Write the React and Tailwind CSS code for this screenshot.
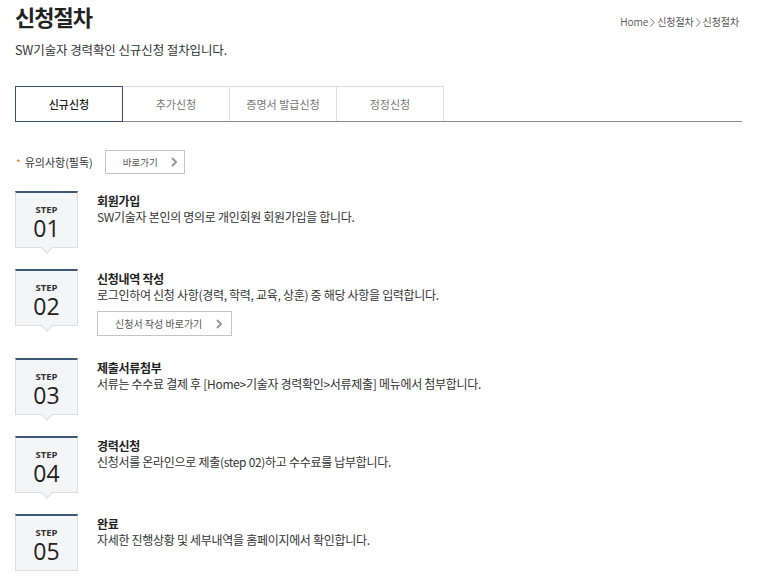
import React from "react";

const KR = { fontFamily: '"Noto Sans CJK KR", "Noto Sans", sans-serif' };
const OS = { fontFamily: '"Open Sans", sans-serif' };

const steps = [
  { no: "01", title: "회원가입", desc: "SW기술자 본인의 명의로 개인회원 회원가입을 합니다." },
  {
    no: "02",
    title: "신청내역 작성",
    desc: "로그인하여 신청 사항(경력, 학력, 교육, 상훈) 중 해당 사항을 입력합니다.",
    button: "신청서 작성 바로가기",
  },
  { no: "03", title: "제출서류첨부", desc: "서류는 수수료 결제 후 [Home>기술자 경력확인>서류제출] 메뉴에서 첨부합니다." },
  { no: "04", title: "경력신청", desc: "신청서를 온라인으로 제출(step 02)하고 수수료를 납부합니다." },
  { no: "05", title: "완료", desc: "자세한 진행상황 및 세부내역을 홈페이지에서 확인합니다.", last: true },
];

const tabs = ["신규신청", "추가신청", "증명서 발급신청", "정정신청"];

function Chevron() {
  return (
    <svg width="6" height="10" viewBox="0 0 6 10" fill="none">
      <path d="M1 1l4 4-4 4" stroke="#9a9a9a" strokeWidth="2" />
    </svg>
  );
}

function Crumb() {
  return (
    <svg width="5" height="9" viewBox="0 0 5 9">
      <path d="M0.5 0.5l3.5 4-3.5 4" stroke="#777" fill="none" />
    </svg>
  );
}

function StepBox({ no, last }) {
  return (
    <div className="relative shrink-0 w-[63px] h-[57px] bg-[#f4f5f7] border border-[#dedede] border-t-2 border-t-[#3e5878] flex flex-col items-center pt-[12px]">
      <span className="text-[9.5px] font-bold leading-[10px] text-[#333]" style={OS}>
        STEP
      </span>
      <span className="mt-[2px] text-[23px] font-medium leading-[22px] text-[#222]" style={OS}>
        {no}
      </span>
      {!last && (
        <div className="absolute left-1/2 -bottom-[5px] -ml-[4px] w-[8px] h-[8px] rotate-45 bg-[#f4f5f7] border-r border-b border-[#dedede]" />
      )}
    </div>
  );
}

export default function App() {
  return (
    <div className="w-[769px] min-h-[576px] bg-white pl-[15px] pr-[27px] text-[#333]" style={KR}>
      <div className="flex justify-between items-start">
        <h1 className="text-[22px] font-bold leading-[32px] tracking-[-1px] text-[#222]">신청절차</h1>
        <div className="mt-[15px] text-[10px] leading-[14px] tracking-[-0.1px] text-[#555] mr-[3px] flex items-center gap-[2px]">
          <span style={OS}>Home</span>
          <Crumb />
          <span>신청절차</span>
          <Crumb />
          <span>신청절차</span>
        </div>
      </div>
      <p className="mt-[8px] text-[12.5px] leading-[20px] tracking-[-0.1px] text-[#333]">SW기술자 경력확인 신규신청 절차입니다.</p>

      <div className="mt-[26px] flex border-b border-[#8c8c8c]">
        {tabs.map((t, i) => (
          <div
            key={t}
            className={
              i === 0
                ? "w-[108px] h-[36px] -mb-px flex items-center justify-center border border-[#34506e] text-[11px] text-[#222] font-medium"
                : "w-[107px] h-[35px] flex items-center justify-center border-t border-r border-[#dddddd] text-[11px] text-[#777]"
            }
          >
            {t}
          </div>
        ))}
      </div>

      <div className="mt-[28px] flex items-center h-[24px]">
        <span className="text-[#e8792e] text-[10px] mr-[4px] ml-[1px]">*</span>
        <span className="text-[11px] text-[#333]">유의사항(필독)</span>
        <button className="ml-[12px] w-[80px] h-[24px] border border-[#c4c4c4] flex items-center pl-[17px] pr-[7px] justify-between text-[9.5px] text-[#555]">
          바로가기
          <Chevron />
        </button>
      </div>

      <div className="mt-[17px]">
        {steps.map((s) => (
          <div key={s.no} className="flex items-start mb-[21px]">
            <StepBox no={s.no} last={s.last} />
            <div className="ml-[19px] mt-[2px]">
              <div className="text-[12px] font-bold leading-[16px] tracking-[-0.3px] text-[#222]">{s.title}</div>
              <div className="text-[12px] leading-[16px] tracking-[-0.3px] text-[#333]">{s.desc}</div>
              {s.button && (
                <button className="mt-[8px] mb-[1px] w-[135px] h-[25px] border border-[#c4c4c4] flex items-center justify-between pl-[17px] pr-[9px] text-[10px] text-[#555]">
                  {s.button}
                  <Chevron />
                </button>
              )}
            </div>
          </div>
        ))}
      </div>
    </div>
  );
}
